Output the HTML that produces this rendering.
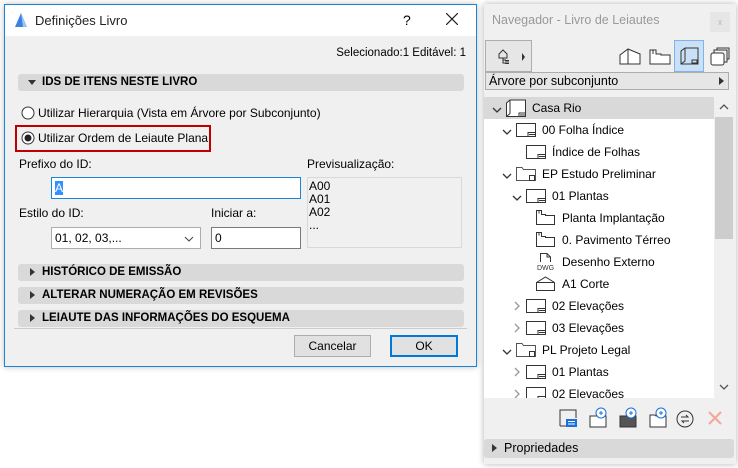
<!DOCTYPE html>
<html><head><meta charset="utf-8"><style>
*{box-sizing:border-box;margin:0;padding:0}
body{width:738px;height:468px;background:#fff;font-family:"Liberation Sans",sans-serif;font-size:12px;color:#000;position:relative;overflow:hidden}
.a{position:absolute}
.dlg{left:4px;top:4px;width:473px;height:363px;background:#f0f0f0;border:1px solid #1a84d8;box-shadow:0 0 6px rgba(0,0,0,.25)}
.tb{left:0;top:0;width:471px;height:31px;background:#fff}
.sec{background:#d9d9d9;border-radius:3px;height:17px;font-weight:bold;font-size:11.5px;line-height:17px;padding-left:24px}
.sec svg{position:absolute;left:10px;top:6px}
.inp{background:#fff;border:1px solid #7a7a7a;height:22px;line-height:20px;padding-left:3px}
.btn{border:1px solid #adadad;background:#e1e1e1;text-align:center;height:22px;line-height:20px}
.nav{left:484px;top:4px;width:252px;height:460px;background:#f0f0f0;box-shadow:0 0 6px rgba(0,0,0,.3)}
.row{position:absolute;left:0;height:22px;line-height:22px;white-space:nowrap}
.row svg{position:absolute;top:0}
</style></head><body>
<svg width="0" height="0" style="position:absolute">
 <defs>
  <g id="sh"><rect x="0.5" y="4.5" width="19" height="13" fill="#fff" stroke="#333"/><path d="M12 17.5V13.5H19.5 M13 15.5H19" fill="none" stroke="#333"/></g>
  <g id="fd"><path d="M0.5 4.5H6L7.5 6.5H19.5V17.5H0.5Z" fill="#fff" stroke="#555"/><rect x="13.5" y="12.5" width="5" height="5" fill="#fff" stroke="#333"/></g>
  <g id="pl"><path d="M0.5 3.5H5.5V7.5H9.5V8.5H18.5V17.5H0.5Z" fill="#fff" stroke="#333"/><path d="M3 3.5V6.5" stroke="#333"/></g>
  <g id="cd"><path d="M5 11L9 15L13 11" fill="none" stroke="#333" stroke-width="1.3"/></g>
  <g id="cr"><path d="M7 7L11 11L7 15" fill="none" stroke="#999" stroke-width="1.3"/></g>
 </defs>
</svg>
<div class="a dlg">
 <div class="a tb">
  <svg class="a" style="left:9px;top:7px" width="14" height="16"><path d="M1 15 L7 1 L13 15 Z" fill="#3b82e0"/><path d="M7 1 L13 15 L9 15 Z" fill="#9cc4f3"/></svg>
  <div class="a" style="left:30px;top:8px;font-size:13px;color:#222">Definições Livro</div>
  <div class="a" style="left:398px;top:7px;font-size:14px">?</div>
  <svg class="a" style="left:441px;top:8px" width="12" height="12"><path d="M0 0L12 12M12 0L0 12" stroke="#222" stroke-width="1.2"/></svg>
 </div>
 <div class="a" style="right:10px;top:42px;font-size:11.5px">Selecionado:1 Editável: 1</div>
 <div class="a sec" style="left:13px;top:69px;width:446px"><svg width="8" height="5"><path d="M0 0H8L4 5Z" fill="#333"/></svg>IDS DE ITENS NESTE LIVRO</div>
 <svg class="a" style="left:16px;top:101px" width="14" height="14"><circle cx="7" cy="7" r="6" fill="#fff" stroke="#333"/></svg>
 <div class="a" style="left:33px;top:101px">Utilizar Hierarquia (Vista em Árvore por Subconjunto)</div>
 <div class="a" style="left:10px;top:120px;width:196px;height:27px;border:2px solid #c00000"></div>
 <svg class="a" style="left:16px;top:126px" width="14" height="14"><circle cx="7" cy="7" r="6" fill="#fff" stroke="#333"/><circle cx="7" cy="7" r="3.5" fill="#222"/></svg>
 <div class="a" style="left:33px;top:126px">Utilizar Ordem de Leiaute Plana</div>
 <div class="a" style="left:14px;top:152px">Prefixo do ID:</div>
 <div class="a inp" style="left:46px;top:172px;width:250px;border-color:#1a84d8"><span style="background:#3390ff;color:#fff">A</span></div>
 <div class="a" style="left:302px;top:152px">Previsualização:</div>
 <div class="a" style="left:302px;top:172px;width:155px;height:71px;border:1px solid #d9d9d9;background:#f0f0f0;line-height:13px;padding:2px 1px">A00<br>A01<br>A02<br>...</div>
 <div class="a" style="left:14px;top:201px">Estilo do ID:</div>
 <div class="a inp" style="left:46px;top:222px;width:150px;border-color:#adadad">01, 02, 03,...<svg class="a" style="right:6px;top:8px" width="10" height="6"><path d="M1 1L5 5L9 1" fill="none" stroke="#444"/></svg></div>
 <div class="a" style="left:206px;top:201px">Iniciar a:</div>
 <div class="a inp" style="left:206px;top:222px;width:90px">0</div>
 <div class="a sec" style="left:13px;top:259px;width:446px"><svg style="top:4px;left:12px" width="5" height="8"><path d="M0 0V8L5 4Z" fill="#333"/></svg>HISTÓRICO DE EMISSÃO</div>
 <div class="a sec" style="left:13px;top:282px;width:446px"><svg style="top:4px;left:12px" width="5" height="8"><path d="M0 0V8L5 4Z" fill="#333"/></svg>ALTERAR NUMERAÇÃO EM REVISÕES</div>
 <div class="a sec" style="left:13px;top:305px;width:446px"><svg style="top:4px;left:12px" width="5" height="8"><path d="M0 0V8L5 4Z" fill="#333"/></svg>LEIAUTE DAS INFORMAÇÕES DO ESQUEMA</div>
 <div class="a" style="left:9px;top:323px;width:453px;border-top:1px solid #ccc"></div>
 <div class="a btn" style="left:289px;top:330px;width:77px">Cancelar</div>
 <div class="a btn" style="left:385px;top:330px;width:68px;border:2px solid #0078d7;line-height:18px">OK</div>
</div>

<div class="a nav">
 <div class="a" style="left:8px;top:9px;font-size:12.5px;color:#999">Navegador - Livro de Leiautes</div>
 <div class="a" style="left:226px;top:8px;width:20px;height:20px;background:#e6e6e6;color:#bbb;font-size:9px;text-align:center;line-height:20px">x</div>
 <div class="a" style="left:1px;top:36px;width:47px;height:32px;border:1px solid #adadad;background:#e6e6e6"></div>
 <svg class="a" style="left:12px;top:44px" width="32" height="18"><path d="M3 6 L7 2 L11 6 V10 H3 Z M7 10V15 H10 M7 12H10" fill="none" stroke="#333"/><rect x="9" y="12" width="4" height="1.5" fill="#333"/><rect x="9" y="14.5" width="4" height="1.5" fill="#333"/><path d="M26 5V13L29 9Z" fill="#333"/></svg>
 <svg class="a" style="left:134px;top:42px" width="24" height="22"><path d="M2 18V9L10 3L22 8V18Z M10 3V18" fill="#fff" stroke="#333"/></svg>
 <svg class="a" style="left:164px;top:42px" width="24" height="22"><path d="M2 4H8V8H13V9H22V18H2Z" fill="#fff" stroke="#333"/><path d="M5 4V8" stroke="#333"/></svg>
 <div class="a" style="left:190px;top:36px;width:30px;height:32px;background:#c9e0f7;border:1px solid #7eb4ea"></div>
 <svg class="a" style="left:194px;top:42px" width="24" height="22"><path d="M3 18V5L7 2H20V18Z M7 2V15L3 18" fill="none" stroke="#333"/><rect x="14" y="14" width="5" height="3" fill="none" stroke="#333"/></svg>
 <svg class="a" style="left:224px;top:42px" width="24" height="22"><rect x="3" y="7" width="13" height="12" rx="2" fill="#fff" stroke="#333"/><path d="M6 7V4H19V16H16 M9 4V2H21V13H19" fill="none" stroke="#333"/></svg>
 <div class="a" style="left:1px;top:68px;width:244px;height:18px;border:1px solid #adadad;background:#e6e6e6;line-height:16px;padding-left:3px;font-size:12.5px">Árvore por subconjunto<svg class="a" style="right:4px;top:4px" width="5" height="8"><path d="M0 0V8L5 4Z" fill="#333"/></svg></div>
 <div class="a" style="left:0;top:93px;width:252px;height:301px;background:#fff;overflow:hidden">
  <div class="a" style="left:230px;top:0;width:22px;height:301px;background:#f0f0f0"></div>
  <div class="a" style="left:231px;top:20px;width:18px;height:122px;background:#cdcdcd"></div>
  <svg class="a" style="left:234px;top:6px" width="12" height="8"><path d="M2 6L6 2L10 6" fill="none" stroke="#555" stroke-width="1.3"/></svg>
  <svg class="a" style="left:234px;top:286px" width="12" height="8"><path d="M2 2L6 6L10 2" fill="none" stroke="#555" stroke-width="1.3"/></svg>
  <div class="a" style="left:0;top:0;width:230px;height:22px;background:#d9d9d9"></div>
  <div class="row" style="top:0"><svg style="left:4px" width="18" height="22"><use href="#cd"/></svg><svg style="left:22px" width="22" height="22"><path d="M0.5 19.5V6L4 3H19.5V19.5Z M4 3V16.5L0.5 19.5" fill="#fff" stroke="#333"/><path d="M13 19.5V16H19.5M14 18H19" fill="none" stroke="#333"/></svg><span style="position:absolute;left:48px">Casa Rio</span></div>
  <div class="row" style="top:22px"><svg style="left:14px" width="18" height="22"><use href="#cd"/></svg><svg style="left:32px" width="21" height="22"><use href="#sh"/></svg><span style="position:absolute;left:58px">00 Folha Índice</span></div>
  <div class="row" style="top:44px"><svg style="left:42px" width="21" height="22"><use href="#sh"/></svg><span style="position:absolute;left:68px">Índice de Folhas</span></div>
  <div class="row" style="top:66px"><svg style="left:14px" width="18" height="22"><use href="#cd"/></svg><svg style="left:32px" width="21" height="22"><use href="#fd"/></svg><span style="position:absolute;left:58px">EP Estudo Preliminar</span></div>
  <div class="row" style="top:88px"><svg style="left:24px" width="18" height="22"><use href="#cd"/></svg><svg style="left:42px" width="21" height="22"><use href="#sh"/></svg><span style="position:absolute;left:68px">01 Plantas</span></div>
  <div class="row" style="top:110px"><svg style="left:52px" width="21" height="22"><use href="#pl"/></svg><span style="position:absolute;left:78px">Planta Implantação</span></div>
  <div class="row" style="top:132px"><svg style="left:52px" width="21" height="22"><use href="#pl"/></svg><span style="position:absolute;left:78px">0. Pavimento Térreo</span></div>
  <div class="row" style="top:154px"><svg style="left:52px" width="21" height="22"><path d="M4.5 11V2.5H11L14.5 6V11" fill="none" stroke="#333"/><path d="M11 2.5V6H14.5" fill="none" stroke="#333"/><text x="1" y="19" font-size="7" font-family="Liberation Sans" fill="#333">DWG</text></svg><span style="position:absolute;left:78px">Desenho Externo</span></div>
  <div class="row" style="top:176px"><svg style="left:52px" width="21" height="22"><path d="M0.5 9.5L9.5 4L18.5 9.5V17.5H0.5Z M0.5 9.5H18.5" fill="#fff" stroke="#333"/></svg><span style="position:absolute;left:78px">A1 Corte</span></div>
  <div class="row" style="top:198px"><svg style="left:24px" width="18" height="22"><use href="#cr"/></svg><svg style="left:42px" width="21" height="22"><use href="#sh"/></svg><span style="position:absolute;left:68px">02 Elevações</span></div>
  <div class="row" style="top:220px"><svg style="left:24px" width="18" height="22"><use href="#cr"/></svg><svg style="left:42px" width="21" height="22"><use href="#sh"/></svg><span style="position:absolute;left:68px">03 Elevações</span></div>
  <div class="row" style="top:242px"><svg style="left:14px" width="18" height="22"><use href="#cd"/></svg><svg style="left:32px" width="21" height="22"><use href="#fd"/></svg><span style="position:absolute;left:58px">PL Projeto Legal</span></div>
  <div class="row" style="top:264px"><svg style="left:24px" width="18" height="22"><use href="#cr"/></svg><svg style="left:42px" width="21" height="22"><use href="#sh"/></svg><span style="position:absolute;left:68px">01 Plantas</span></div>
  <div class="row" style="top:286px"><svg style="left:24px" width="18" height="22"><use href="#cr"/></svg><svg style="left:42px" width="21" height="22"><use href="#sh"/></svg><span style="position:absolute;left:68px">02 Elevações</span></div>
 </div>
 <svg class="a" style="left:70px;top:402px" width="180" height="24">
  <path d="M6 20V4H22V12" fill="none" stroke="#333"/><path d="M6 20H12" stroke="#333"/><rect x="12" y="13" width="11" height="8" fill="#1a6fd8"/><path d="M14 15.5H21M14 18H21" stroke="#fff"/>
  <rect x="36" y="10" width="16" height="11" fill="#fff" stroke="#333"/><circle cx="47" cy="7" r="5" fill="#fff" stroke="#1a6fd8"/><path d="M45 7H49M47 5V9" stroke="#1a6fd8"/>
  <rect x="66" y="10" width="16" height="11" fill="#555" stroke="#333"/><circle cx="77" cy="7" r="5" fill="#fff" stroke="#1a6fd8"/><path d="M75 7H79M77 5V9" stroke="#1a6fd8"/>
  <path d="M96 21V9H101L102 10H112V21Z" fill="#fff" stroke="#333"/><circle cx="107" cy="7" r="5" fill="#fff" stroke="#1a6fd8"/><path d="M105 7H109M107 5V9" stroke="#1a6fd8"/>
  <circle cx="131" cy="13" r="8" fill="none" stroke="#333"/><path d="M127 11H134L132 9M135 15H128L130 17" fill="none" stroke="#333"/>
  <path d="M155 6L167 18M167 6L155 18" stroke="#f4a59a" stroke-width="2"/>
 </svg>
 <div class="a" style="left:0;top:435px;width:250px;height:19px;background:#d9d9d9;border-radius:3px;line-height:19px;padding-left:20px;font-size:12.5px"><svg class="a" style="left:8px;top:5px" width="5" height="8"><path d="M0 0V8L5 4Z" fill="#333"/></svg>Propriedades</div>
</div>
</body></html>
